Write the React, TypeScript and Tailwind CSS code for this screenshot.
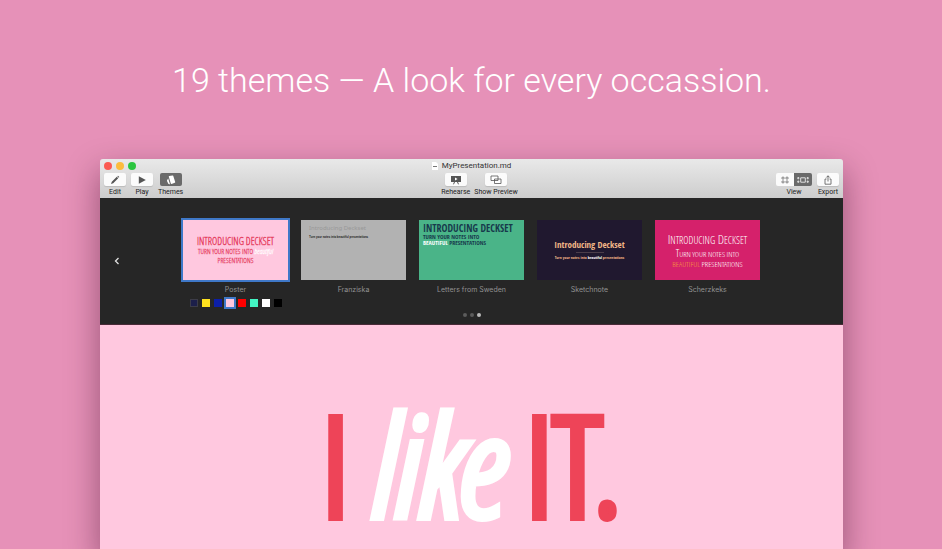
import React from "react";

type ToolProps = {
  label: string;
  active?: boolean;
  children: React.ReactNode;
};

function Tool({ label, active, children }: ToolProps) {
  return (
    <button type="button" className="flex flex-col items-center gap-[2px]">
      <span
        className={
          active
            ? "flex h-[13px] w-[22px] items-center justify-center rounded-[2px] bg-[#6a6a6a] text-white"
            : "flex h-[13px] w-[22px] items-center justify-center rounded-[2px] bg-[#fbfbfb] text-[#555555] shadow-[0_1px_1px_rgba(0,0,0,0.12)]"
        }
      >
        {children}
      </span>
      <span className="whitespace-nowrap text-[7px] leading-[8px] text-[#222222]">{label}</span>
    </button>
  );
}

type ThemeProps = {
  name: string;
  selected?: boolean;
  slide: string;
  children: React.ReactNode;
};

function Theme({ name, selected, slide, children }: ThemeProps) {
  return (
    <div className="flex w-[105px] flex-col items-center">
      <button
        type="button"
        aria-label={name}
        className={
          "flex h-[60px] w-full flex-col whitespace-nowrap " +
          slide +
          (selected ? " ring-2 ring-[#3f78c8]" : "")
        }
      >
        {children}
      </button>
      <span className="mt-[5px] font-['Inter','Liberation_Sans',sans-serif] text-[7px] leading-[10px] text-[#929292]">{name}</span>
    </div>
  );
}

const swatches = [
  { name: "Navy", fill: "bg-[#1c1f4a]", edge: "border border-[#3c3c48]" },
  { name: "Yellow", fill: "bg-[#ffe21f]", edge: "" },
  { name: "Blue", fill: "bg-[#0c1fa8]", edge: "" },
  { name: "Pink", fill: "bg-[#ffc8df]", edge: "ring-2 ring-[#3f78c8]" },
  { name: "Red", fill: "bg-[#ff0000]", edge: "" },
  { name: "Mint", fill: "bg-[#43f5c4]", edge: "" },
  { name: "White", fill: "bg-white", edge: "" },
  { name: "Black", fill: "bg-black", edge: "" },
];

export default function App() {
  return (
    <main className="flex h-screen flex-col overflow-hidden bg-[#e691b8] pl-[100px] pr-[99px] font-['Roboto','Liberation_Sans',sans-serif]">
      <h1 className="flex h-[159px] shrink-0 items-center justify-center whitespace-nowrap font-light text-[34px] leading-[40px] text-white">
        19 themes — A look for every occassion.
      </h1>

      <section className="flex flex-1 flex-col rounded-t-[3px] shadow-[0_14px_32px_2px_rgba(50,0,30,0.4)]">
        <header className="flex h-[39px] shrink-0 flex-col rounded-t-[3px] bg-linear-to-b from-[#e9e9e9] to-[#cdcdcd]">
          <div className="grid h-[14px] grid-cols-[1fr_auto_1fr] items-center px-1">
            <div className="flex gap-1">
              <button type="button" aria-label="Close" className="size-[8px] rounded-full bg-[#fb5a52]" />
              <button type="button" aria-label="Minimize" className="size-[8px] rounded-full bg-[#fcbc3c]" />
              <button type="button" aria-label="Zoom" className="size-[8px] rounded-full bg-[#2bc53f]" />
            </div>
            <div className="flex items-center gap-1">
              <svg viewBox="0 0 6 8" className="h-[8px] w-[6px]">
                <path d="M0 0h4l2 2v6H0z" fill="#ffffff" />
                <path d="M1 4.5h4" stroke="#777777" />
              </svg>
              <span className="text-[8px] leading-[10px] text-[#333333]">MyPresentation.md</span>
            </div>
          </div>
          <div className="grid grid-cols-[1fr_auto_1fr] items-start px-1">
            <div className="flex gap-[5px]">
              <Tool label="Edit">
                <svg viewBox="0 0 10 10" className="size-[10px]" fill="currentColor">
                  <path d="M1 9l.8-2.200L6.800 1.800 8.200 3.200 3.200 8.200zM7.300 1.300l.7-.6L9.300 2l-.6.700z" />
                </svg>
              </Tool>
              <Tool label="Play">
                <svg viewBox="0 0 10 10" className="size-[10px]" fill="currentColor">
                  <path d="M1.800 1.300L8.800 5 1.800 8.700z" />
                </svg>
              </Tool>
              <Tool label="Themes" active>
                <svg viewBox="0 0 10 10" className="size-[10px]" fill="currentColor">
                  <path d="M2.800 1.800Q2.700 1.300 3.200 1.100L6.500.4Q7 .3 7.200.8L9.200 7Q9.300 7.500 8.800 7.700L5.500 8.900Q5 9 4.800 8.500zM2.200 3.600L4 9.300Q2.600 9.500 2.200 8.600L1 6Q.8 5.200 2.200 3.600z" />
                </svg>
              </Tool>
            </div>
            <div className="flex gap-1 pl-[16px]">
              <Tool label="Rehearse">
                <svg viewBox="0 0 12 10" className="h-[10px] w-[12px]">
                  <path d="M1 1h10v6H1z" fill="currentColor" />
                  <path d="M5 2.500L7.600 4 5 5.500z" fill="#ffffff" />
                  <path d="M4.500 7L3.500 9.300M7.500 7l1 2.300" stroke="currentColor" fill="none" />
                </svg>
              </Tool>
              <Tool label="Show Preview">
                <svg viewBox="0 0 12 10" className="h-[10px] w-[12px]" fill="#ffffff" stroke="currentColor" strokeWidth="0.8">
                  <path d="M1 1h7v4.500H1zM4.500 4h6.500v4.500H4.500z" />
                </svg>
              </Tool>
            </div>
            <div className="flex justify-end gap-[5px]">
              <div className="flex flex-col items-center gap-[2px]">
                <div className="flex h-[13px] overflow-hidden rounded-[2px]">
                  <button type="button" aria-label="Grid view" className="flex w-[18px] items-center justify-center bg-[#fbfbfb] text-[#777777]">
                    <svg viewBox="0 0 8 8" className="size-[8px]" fill="none" stroke="currentColor" strokeWidth="0.8">
                      <path d="M1 1.200h2v1.800H1zM5 1.200h2v1.800H5zM1 5h2v1.800H1zM5 5h2v1.800H5z" />
                    </svg>
                  </button>
                  <button type="button" aria-label="Filmstrip view" className="flex w-[18px] items-center justify-center bg-[#6a6a6a] text-[#eeeeee]">
                    <svg viewBox="0 0 12 8" className="h-[8px] w-[12px]" fill="none" stroke="currentColor" strokeWidth="0.9">
                      <path d="M3.700 1.800h4.600v4.400H3.700zM.8 1.500h1v1.300h-1zM.8 5h1v1.300h-1zM10.200 1.500h1v1.300h-1zM10.200 5h1v1.300h-1z" />
                    </svg>
                  </button>
                </div>
                <span className="text-[7px] leading-[8px] text-[#222222]">View</span>
              </div>
              <Tool label="Export">
                <svg viewBox="0 0 10 10" className="size-[10px]" fill="none" stroke="currentColor" strokeWidth="0.8">
                  <path d="M3.500 4H2v5.200h6V4H6.500M5 6.500V.8M3.300 2.500L5 .8l1.700 1.700" />
                </svg>
              </Tool>
            </div>
          </div>
        </header>

        <div className="flex h-[127px] shrink-0 flex-col border-b border-[#4a2a38] bg-[#262626]">
          <div className="grid h-[111px] grid-cols-[1fr_auto_1fr] pt-[22px]">
            <button type="button" aria-label="Previous themes" className="mt-[37px] h-[8px] w-[34px] text-[#e0e0e0]">
              <svg viewBox="0 0 8 8" className="mx-auto size-[8px]" fill="none" stroke="currentColor" strokeWidth="1.300">
                <path d="M5.500 1L2.500 4l3 3" />
              </svg>
            </button>
            <div className="flex gap-[13px]">
              <div className="flex flex-col gap-[4px]">
                <Theme
                  name="Poster"
                  selected
                  slide="items-center justify-center bg-[#ffc8df] font-['Open_Sans_Condensed_Light','Open_Sans_Condensed','Open_Sans',sans-serif] font-bold text-[#e5405f]"
                >
                  <span className="text-[10px] leading-[12px]">INTRODUCING DECKSET</span>
                  <span className="text-[7px] leading-[9px]">
                    TURN YOUR NOTES INTO <i className="text-white">beautiful</i>
                  </span>
                  <span className="text-[7px] leading-[9px]">PRESENTATIONS</span>
                </Theme>
                <div className="flex justify-center gap-1">
                  {swatches.map((s) => (
                    <button
                      key={s.name}
                      type="button"
                      aria-label={s.name}
                      className={"size-[8px] " + s.fill + " " + s.edge}
                    />
                  ))}
                </div>
              </div>
              <Theme name="Franziska" slide="items-start bg-[#b2b2b2] px-2 pt-[4px]">
                <span className="font-['Noto_Sans',sans-serif] text-[6px] leading-[9px] text-[#989898]">Introducing Deckset</span>
                <span className="text-[3px] font-bold leading-[8px] text-[#333333]">Turn your notes into beautiful presentations</span>
              </Theme>
              <Theme
                name="Letters from Sweden"
                slide="items-start bg-[#4ab488] px-1 pt-[2px] font-['Open_Sans_Condensed','Open_Sans',sans-serif] font-extrabold text-[#173a4c]"
              >
                <span className="text-[10px] leading-[12px]">INTRODUCING DECKSET</span>
                <span className="text-[6px] leading-[6px]">TURN YOUR NOTES INTO</span>
                <span className="text-[6px] leading-[6px]">
                  <b className="text-white">BEAUTIFUL</b> PRESENTATIONS
                </span>
              </Theme>
              <Theme
                name="Sketchnote"
                slide="items-center justify-center bg-[#20182f] font-['Open_Sans_Condensed','Open_Sans',sans-serif] text-[#f2b787]"
              >
                <span className="text-[9px] font-bold leading-[10px]">Introducing Deckset</span>
                <span className="my-[2px] h-px w-[28px] bg-[#4b3d4a]" />
                <span className="text-[4px] font-bold leading-[6px]">
                  Turn your notes into <b className="text-white">beautiful</b> presentations
                </span>
              </Theme>
              <Theme
                name="Scherzkeks"
                slide="items-center justify-center bg-[#d5216b] font-['Open_Sans_Condensed_Light','Open_Sans_Condensed','Open_Sans',sans-serif] font-light text-white"
              >
                <span className="text-[13px] leading-[15px]">
                  I<span className="text-[10px]">NTRODUCING</span> D<span className="text-[10px]">ECKSET</span>
                </span>
                <span className="text-[10px] leading-[11px]">
                  T<span className="text-[8px]">URN YOUR NOTES INTO</span>
                </span>
                <span className="text-[8px] leading-[10px]">
                  <span className="text-[#f79a3a]">BEAUTIFUL</span> PRESENTATIONS
                </span>
              </Theme>
            </div>
            <span />
          </div>
          <div className="flex justify-center gap-[3px] pt-1">
            <button type="button" aria-label="Page 1" className="size-[4px] rounded-full bg-[#5c5c5c]" />
            <button type="button" aria-label="Page 2" className="size-[4px] rounded-full bg-[#5c5c5c]" />
            <button type="button" aria-label="Page 3" className="size-[4px] rounded-full bg-[#bbbbbb]" />
          </div>
        </div>

        <article className="flex flex-1 items-start justify-center overflow-hidden bg-[#ffc8df] pt-[78px]">
          <p className="flex items-baseline gap-5 whitespace-nowrap font-['Open_Sans_Condensed_Light','Open_Sans_Condensed','Open_Sans',sans-serif] text-[138px] font-light leading-[120px] text-[#ee4458] [-webkit-text-stroke:8px_#ee4458]">
            <span>I</span>
            <em className="text-white [-webkit-text-stroke:8px_#ffffff]">like</em>
            <span>IT.</span>
          </p>
        </article>
      </section>
    </main>
  );
}
